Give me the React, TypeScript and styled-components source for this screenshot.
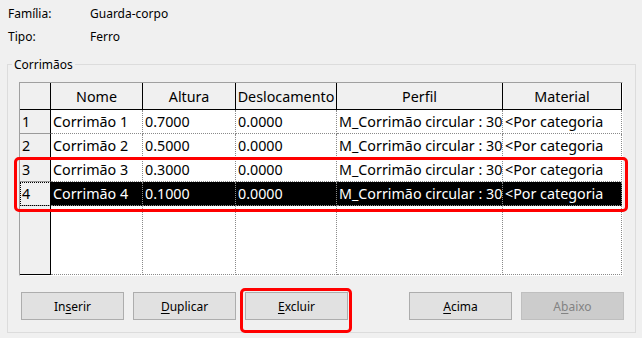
import React from "react";
import styled, { createGlobalStyle } from "styled-components";

const GlobalStyle = createGlobalStyle`
  html, body {
    margin: 0;
    padding: 0;
    background: #f0f0f0;
  }
  body {
    width: 642px;
    height: 338px;
    overflow: hidden;
    font-family: "Noto Sans", "Open Sans", sans-serif;
    color: #000;
  }
`;

const Page = styled.div`
  width: 642px;
  height: 338px;
  background: #f0f0f0;
`;

const Info = styled.div`
  display: grid;
  grid-template-columns: 82px auto;
  grid-auto-rows: 16px;
  row-gap: 7px;
  padding: 6px 0 0 8px;
  font-size: 12px;
  line-height: 16px;
`;

const GroupBox = styled.fieldset`
  margin: 11px 6px 0 7px;
  padding: 9px 12px 12px 11px;
  border: 1px solid #dcdcdc;
  min-width: 0;
`;

const Legend = styled.legend`
  margin-left: -7px;
  padding: 0 2px;
  font-size: 12px;
  line-height: 17px;
`;

const GridWrap = styled.div`
  position: relative;
`;

const Grid = styled.div`
  display: grid;
  grid-template-columns: 31px 92px 93px 101px 166px 119px;
  grid-template-rows: 27px repeat(4, 24px) 1fr;
  width: 602px;
  height: 192px;
  border-top: 1px solid #a0a0a0;
  border-left: 1px solid #a0a0a0;
  border-right: 1px solid #ffffff;
  border-bottom: 1px solid #ffffff;
  background: #fff;
  font-size: 14.3px;
`;

const HeadCell = styled.div`
  display: flex;
  align-items: center;
  justify-content: center;
  background: #f0f0f0;
  border-right: 1px solid #000;
  border-bottom: 1px solid #000;
`;

const RowHead = styled.div<{ $focus?: boolean; $filler?: boolean }>`
  display: flex;
  align-items: center;
  padding-left: 2px;
  background: #f0f0f0;
  border-right: 1px solid #000;
  border-bottom: 1px solid ${(p) => (p.$filler ? "#000" : "#9a9a9a")};
  outline: ${(p) => (p.$focus ? "1px dotted #000" : "none")};
  outline-offset: -1px;
`;

const Cell = styled.div<{ $selected?: boolean }>`
  display: flex;
  align-items: center;
  padding-left: 2px;
  white-space: nowrap;
  overflow: hidden;
  background: ${(p) => (p.$selected ? "#000" : "#fff")};
  color: ${(p) => (p.$selected ? "#fff" : "#000")};
  border-right: 1px dotted #8a8a8a;
  border-bottom: 1px dotted #8a8a8a;
`;

const Highlight = styled.div`
  position: absolute;
  left: -5px;
  right: -5px;
  top: 75px;
  height: 55px;
  box-sizing: border-box;
  border: 3px solid #ff0000;
  border-radius: 5px;
  pointer-events: none;
`;

const Buttons = styled.div`
  display: flex;
  justify-content: space-between;
  margin: 16px -1px 0 2px;
`;

const ButtonGroup = styled.div`
  display: flex;
  gap: 9px;
`;

const Button = styled.button<{ $disabled?: boolean }>`
  width: 103px;
  height: 28px;
  padding: 0;
  box-sizing: border-box;
  font-family: "Noto Sans", "Open Sans", sans-serif;
  font-size: 12px;
  color: ${(p) => (p.$disabled ? "#838383" : "#000")};
  background: ${(p) => (p.$disabled ? "#cccccc" : "#e1e1e1")};
  border: 1px solid ${(p) => (p.$disabled ? "#bfbfbf" : "#adadad")};
  border-radius: 0;
  u {
    text-decoration-thickness: 1px;
    text-underline-offset: 2px;
  }
`;

const ButtonSlot = styled.div`
  position: relative;
`;

const ButtonMark = styled.div`
  position: absolute;
  left: -5px;
  right: -4px;
  top: -4px;
  bottom: -13px;
  border: 3px solid #ff0000;
  border-radius: 5px;
  pointer-events: none;
`;

const columns = ["Nome", "Altura", "Deslocamento", "Perfil", "Material"];

const rows = [
  ["Corrimão 1", "0.7000", "0.0000", "M_Corrimão circular : 30", "<Por categoria"],
  ["Corrimão 2", "0.5000", "0.0000", "M_Corrimão circular : 30", "<Por categoria"],
  ["Corrimão 3", "0.3000", "0.0000", "M_Corrimão circular : 30", "<Por categoria"],
  ["Corrimão 4", "0.1000", "0.0000", "M_Corrimão circular : 30", "<Por categoria"],
];

export default function App() {
  return (
    <Page>
      <GlobalStyle />
      <Info>
        <span>Família:</span>
        <span>Guarda-corpo</span>
        <span>Tipo:</span>
        <span>Ferro</span>
      </Info>
      <GroupBox>
        <Legend>Corrimãos</Legend>
        <GridWrap>
          <Grid>
            <HeadCell />
            {columns.map((c) => (
              <HeadCell key={c}>{c}</HeadCell>
            ))}
            {rows.map((r, i) => (
              <React.Fragment key={i}>
                <RowHead $focus={i === 3}>{i + 1}</RowHead>
                {r.map((v, j) => (
                  <Cell key={j} $selected={i === 3}>
                    {v}
                  </Cell>
                ))}
              </React.Fragment>
            ))}
            <RowHead $filler />
            {columns.map((c) => (
              <Cell key={c} />
            ))}
          </Grid>
          <Highlight />
        </GridWrap>
        <Buttons>
          <ButtonGroup>
            <Button>
              In<u>s</u>erir
            </Button>
            <Button>
              <u>D</u>uplicar
            </Button>
            <ButtonSlot>
              <Button>
                <u>E</u>xcluir
              </Button>
              <ButtonMark />
            </ButtonSlot>
          </ButtonGroup>
          <ButtonGroup>
            <Button>
              <u>A</u>cima
            </Button>
            <Button $disabled>
              A<u>b</u>aixo
            </Button>
          </ButtonGroup>
        </Buttons>
      </GroupBox>
    </Page>
  );
}
